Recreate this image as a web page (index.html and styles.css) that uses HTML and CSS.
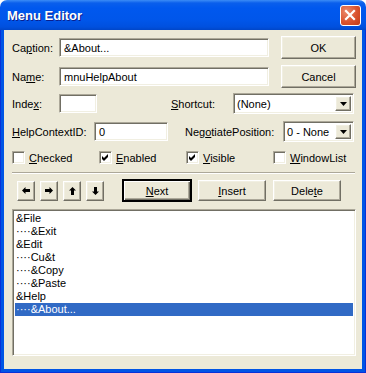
FILE: index.html
```html
<!DOCTYPE html>
<html lang="en">
<head>
    <meta charset="UTF-8">
    <title>Menu Editor</title>
    <link rel="stylesheet" href="styles.css">
</head>
<body>
    <div class="window">
        <div class="titlebar">
            <span class="title">Menu Editor</span>
            <span class="close-btn">
                <svg width="21" height="21" viewBox="0 0 21 21">
                    <path d="M6 6 L14 14 M14 6 L6 14" stroke="#fff" stroke-width="2.2" stroke-linecap="square"/>
                </svg>
            </span>
        </div>
        <div class="frame">
            <div class="client">
                <div class="top">
                    <div class="top-fields">
                        <div class="row row-top">
                            <span class="lbl lbl-top">Ca<u>p</u>tion:</span>
                            <div class="textbox tb-wide">&amp;About...</div>
                        </div>
                        <div class="row row-top">
                            <span class="lbl lbl-top">Na<u>m</u>e:</span>
                            <div class="textbox tb-wide">mnuHelpAbout</div>
                        </div>
                    </div>
                    <div class="side-buttons">
                        <div class="btn btn-side">OK</div>
                        <div class="btn btn-side">Cancel</div>
                    </div>
                </div>

                <div class="row row-mid row-index">
                    <span class="lbl lbl-top">Inde<u>x</u>:</span>
                    <div class="textbox tb-index"></div>
                    <span class="lbl lbl-shortcut"><u>S</u>hortcut:</span>
                    <div class="combo combo-shortcut">
                        <span class="combo-text">(None)</span>
                        <span class="combo-btn"><svg width="7" height="4" viewBox="0 0 7 4"><polygon points="0,0 7,0 3.5,4" fill="#000"/></svg></span>
                    </div>
                </div>

                <div class="row row-mid row-help">
                    <span class="lbl lbl-help"><u>H</u>elpContextID:</span>
                    <div class="textbox tb-help">0</div>
                    <span class="lbl lbl-negotiate">Neg<u>o</u>tiatePosition:</span>
                    <div class="combo combo-negotiate">
                        <span class="combo-text">0 - None</span>
                        <span class="combo-btn"><svg width="7" height="4" viewBox="0 0 7 4"><polygon points="0,0 7,0 3.5,4" fill="#000"/></svg></span>
                    </div>
                </div>

                <div class="checks">
                    <div class="check">
                        <span class="check-box"></span>
                        <span class="check-label"><u>C</u>hecked</span>
                    </div>
                    <div class="check">
                        <span class="check-box"><svg width="7" height="7" viewBox="0 0 7 7"><polygon points="0,2 2,4 6,0 6,3 2,7 0,5" fill="#000"/></svg></span>
                        <span class="check-label"><u>E</u>nabled</span>
                    </div>
                    <div class="check">
                        <span class="check-box"><svg width="7" height="7" viewBox="0 0 7 7"><polygon points="0,2 2,4 6,0 6,3 2,7 0,5" fill="#000"/></svg></span>
                        <span class="check-label"><u>V</u>isible</span>
                    </div>
                    <div class="check">
                        <span class="check-box"></span>
                        <span class="check-label"><u>W</u>indowList</span>
                    </div>
                </div>

                <div class="separator"></div>

                <div class="toolbar">
                    <div class="btn btn-arrow"><svg width="8" height="7" viewBox="0 0 8 7"><polygon points="0,3.5 3.5,0 3.5,2 8,2 8,5 3.5,5 3.5,7" fill="#000"/></svg></div>
                    <div class="btn btn-arrow"><svg width="8" height="7" viewBox="0 0 8 7"><polygon points="8,3.5 4.5,0 4.5,2 0,2 0,5 4.5,5 4.5,7" fill="#000"/></svg></div>
                    <div class="btn btn-arrow"><svg width="7" height="8" viewBox="0 0 7 8"><polygon points="3.5,0 7,3.5 5,3.5 5,8 2,8 2,3.5 0,3.5" fill="#000"/></svg></div>
                    <div class="btn btn-arrow"><svg width="7" height="8" viewBox="0 0 7 8"><polygon points="3.5,8 7,4.5 5,4.5 5,0 2,0 2,4.5 0,4.5" fill="#000"/></svg></div>
                    <div class="btn btn-action btn-default"><u>N</u>ext</div>
                    <div class="btn btn-action"><u>I</u>nsert</div>
                    <div class="btn btn-action">Dele<u>t</u>e</div>
                </div>

                <div class="listbox">
                    <div class="list-item">&amp;File</div>
                    <div class="list-item">····&amp;Exit</div>
                    <div class="list-item">&amp;Edit</div>
                    <div class="list-item">····Cu&amp;t</div>
                    <div class="list-item">····&amp;Copy</div>
                    <div class="list-item">····&amp;Paste</div>
                    <div class="list-item">&amp;Help</div>
                    <div class="list-item selected">····&amp;About...</div>
                </div>
            </div>
        </div>
    </div>
</body>
</html>
```

FILE: styles.css
```css
body {
    margin: 0;
    background: #ffffff;
    font-family: "Liberation Sans", Arial, sans-serif;
    font-size: 11px;
    color: #000;
}

u {
    text-decoration: underline;
    text-underline-offset: 1px;
}

.window {
    width: 366px;
    height: 373px;
    display: flex;
    flex-direction: column;
    border-radius: 7px 7px 0 0;
    overflow: hidden;
}

/* Title bar */
.titlebar {
    height: 30px;
    flex: none;
    display: flex;
    align-items: center;
    justify-content: space-between;
    padding: 0 5px 0 7px;
    background: linear-gradient(#3b8cf6 0, #0a5fec 3px, #0058ee 8px, #0056ea 20px, #0050de 27px, #0046c8 30px);
}

.title {
    font-family: "Liberation Sans", Arial, sans-serif;
    font-weight: bold;
    font-size: 13px;
    color: #fff;
    text-shadow: 1px 1px 0 #0a1e8c;
    margin-top: 1px;
}

.close-btn {
    width: 21px;
    height: 21px;
    box-sizing: border-box;
    border: 1px solid #fff;
    border-radius: 3px;
    margin-top: 1px;
    background: radial-gradient(circle at 30% 30%, #eb8a6d 0, #d9532f 55%, #c23b16 100%);
    display: flex;
    align-items: center;
    justify-content: center;
}

.close-btn svg {
    margin: -1px;
}

/* Frame + client */
.frame {
    flex: 1;
    display: flex;
    padding: 0 4px 4px;
    background: #0055e5;
    box-shadow: inset 1px 0 #0831d9, inset -1px 0 #0831d9, inset 0 -1px #0831d9;
}

.client {
    flex: 1;
    background: #ece9d8;
    padding: 6px 0 0 8px;
    display: flex;
    flex-direction: column;
}

/* 3D borders */
.textbox,
.combo,
.check-box,
.listbox {
    box-sizing: border-box;
    background: #fff;
    border: 1px solid;
    border-color: #aca899 #fff #fff #aca899;
    box-shadow: inset 1px 1px 0 #716f64, inset -1px -1px 0 #f1efe2;
}

.btn,
.combo-btn {
    box-sizing: border-box;
    background: #ece9d8;
    border: 1px solid;
    border-color: #fff #716f64 #716f64 #fff;
    box-shadow: inset -1px -1px 0 #aca899, inset 1px 1px 0 #f1efe2;
    display: flex;
    align-items: center;
    justify-content: center;
}

/* Rows */
.top {
    display: flex;
}

.top-fields {
    display: flex;
    flex-direction: column;
    gap: 6px;
}

.row {
    display: flex;
    align-items: center;
}

.row-top {
    height: 23px;
}

.row-mid {
    height: 21px;
}

.row-index {
    margin-top: 5px;
}

.row-help {
    margin-top: 7px;
}

.lbl {
    white-space: nowrap;
}

.lbl-top {
    width: 47px;
}

.lbl-shortcut {
    margin-left: 74px;
    width: 62px;
}

.lbl-help {
    width: 82px;
}

.lbl-negotiate {
    margin-left: 17px;
    width: 98px;
}

.textbox {
    height: 19px;
    padding: 2px 0 0 4px;
    line-height: 14px;
}

.tb-wide {
    width: 210px;
}

.tb-index {
    width: 38px;
}

.tb-help {
    width: 74px;
}

.side-buttons {
    margin-left: 12px;
    display: flex;
    flex-direction: column;
    gap: 6px;
}

.btn-side {
    width: 75px;
    height: 23px;
}

/* Combos */
.combo {
    height: 21px;
    display: flex;
    align-items: stretch;
    padding: 2px;
}

.combo-shortcut {
    width: 121px;
}

.combo-negotiate {
    width: 71px;
}

.combo-text {
    flex: 1;
    padding-left: 1px;
    line-height: 17px;
}

.combo-btn {
    width: 16px;
    flex: none;
}

/* Checkboxes */
.checks {
    display: flex;
    margin-top: 9px;
    height: 13px;
}

.check {
    width: 87px;
    display: flex;
    align-items: center;
    gap: 4px;
}

.check-box {
    width: 13px;
    height: 13px;
    padding: 2px 0 0 2px;
    display: flex;
}

.separator {
    margin-top: 8px;
    width: 343px;
    height: 1px;
    border-top: 1px solid #aca899;
    border-bottom: 1px solid #fff;
    height: 0;
}

/* Toolbar */
.toolbar {
    margin-top: 6px;
    height: 21px;
    display: flex;
    align-items: center;
}

.btn-arrow {
    width: 18px;
    height: 20px;
    margin-left: 5px;
}

.btn-action {
    width: 68px;
    height: 21px;
    margin-left: 7px;
}

.btn-default {
    margin-left: 19px;
    outline: 1px solid #000;
    outline-offset: 0;
    border-color: #000 #000 #000 #000;
    box-shadow: inset 1px 1px 0 #fff, inset -1px -1px 0 #716f64, inset -2px -2px 0 #aca899;
}

/* List */
.listbox {
    margin-top: 8px;
    width: 344px;
    height: 147px;
    padding: 2px;
}

.list-item {
    height: 13px;
    line-height: 13px;
    padding-left: 1px;
    white-space: nowrap;
}

.list-item.selected {
    background: #316ac5;
    color: #fff;
}
```
